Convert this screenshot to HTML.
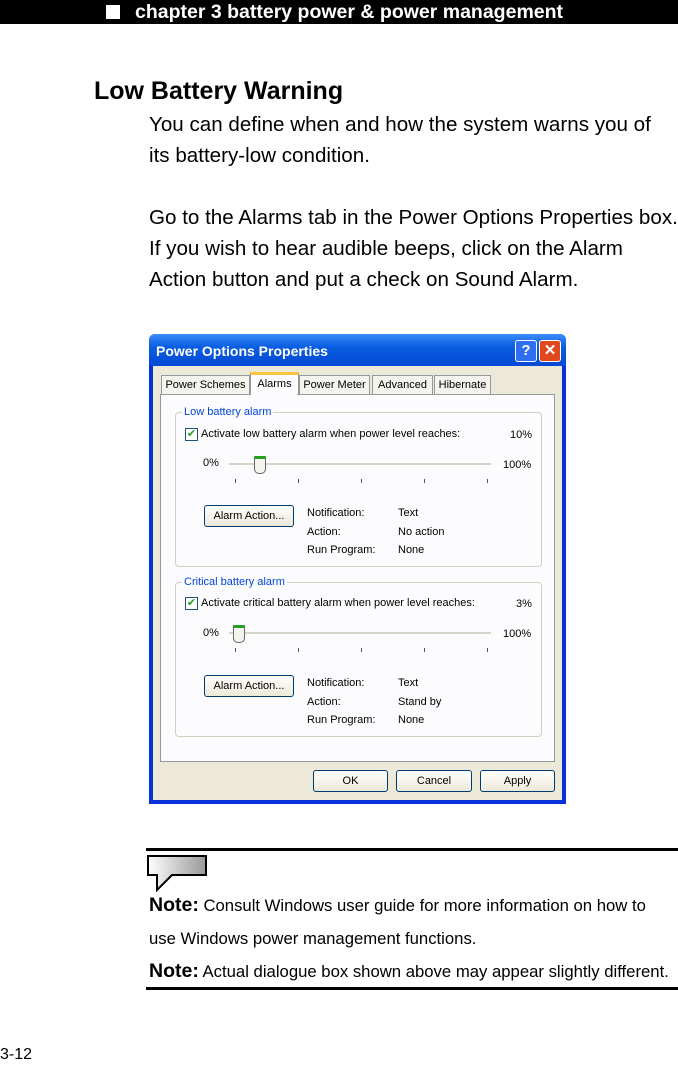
<!DOCTYPE html>
<html><head><style>
body{margin:0;width:678px;height:1090px;background:#fff;position:relative;font-family:"Liberation Sans",Arial,sans-serif;overflow:hidden}
.a{position:absolute;white-space:nowrap}
.t{font-size:20.6px;color:#000}
.d{font-family:"Liberation Sans",sans-serif;font-size:11px;color:#000}
.btn{position:absolute;border:1px solid #003c74;border-radius:3px;background:linear-gradient(#fff,#ece9d8);font-family:"Liberation Sans",sans-serif;font-size:11px;text-align:center;box-sizing:border-box}
.grp{position:absolute;border:1px solid #d0d0bf;border-radius:4px}
.tick{position:absolute;width:1px;height:4px;background:#555}
</style></head><body>
<div class="a" style="left:0;top:0;width:678px;height:24px;background:#000"></div>
<div class="a" style="left:106px;top:5px;width:14px;height:14px;background:#fff"></div>
<div class="a" style="left:135px;top:1px;font-size:19.5px;font-weight:bold;color:#fff">chapter 3 battery power &amp; power management</div>
<div class="a" style="left:94px;top:77px;font-size:25px;font-weight:bold">Low Battery Warning</div>
<div class="a t" style="left:149px;top:113px">You can define when and how the system warns you of</div>
<div class="a t" style="left:149px;top:144px">its battery-low condition.</div>
<div class="a t" style="left:149px;top:206px">Go to the Alarms tab in the Power Options Properties box.</div>
<div class="a t" style="left:149px;top:237px">If you wish to hear audible beeps, click on the Alarm</div>
<div class="a t" style="left:149px;top:268px">Action button and put a check on Sound Alarm.</div>

<div class="a" style="left:149px;top:334px;width:417px;height:470px;background:#0831d9;border-radius:6px 6px 0 0"></div>
<div class="a" style="left:149px;top:334px;width:417px;height:32px;background:linear-gradient(#3d8bfa,#0a5ee0 40%,#0549d6);border-radius:6px 6px 0 0"></div>
<div class="a" style="left:156px;top:343px;font-family:'Liberation Sans',sans-serif;font-weight:bold;font-size:14px;color:#fff">Power Options Properties</div>
<div class="a" style="left:515px;top:340px;width:20px;height:20px;background:#2d6ff0;border:1px solid #fff;border-radius:3px;color:#fff;font-weight:bold;text-align:center;font-size:15px;line-height:20px">?</div>
<div class="a" style="left:539px;top:340px;width:20px;height:20px;background:#e0481e;border:1px solid #fff;border-radius:3px;color:#fff;font-weight:bold;text-align:center;font-size:15px;line-height:20px">✕</div>
<div class="a" style="left:153px;top:366px;width:409px;height:434px;background:#ece9d8"></div>
<div class="a d" style="left:161px;top:375px;width:87px;height:18px;border:1px solid #919b9c;background:#f4f3ee;text-align:center;line-height:18px">Power Schemes</div>
<div class="a d" style="left:250px;top:372px;width:47px;height:22px;border:1px solid #919b9c;border-top:3px solid #ffc83c;border-bottom:none;background:#fcfcfe;text-align:center;line-height:18px">Alarms</div>
<div class="a d" style="left:299px;top:375px;width:69px;height:18px;border:1px solid #919b9c;background:#f4f3ee;text-align:center;line-height:18px">Power Meter</div>
<div class="a d" style="left:372px;top:375px;width:59px;height:18px;border:1px solid #919b9c;background:#f4f3ee;text-align:center;line-height:18px">Advanced</div>
<div class="a d" style="left:434px;top:375px;width:55px;height:18px;border:1px solid #919b9c;background:#f4f3ee;text-align:center;line-height:18px">Hibernate</div>
<div class="a" style="left:160px;top:394px;width:393px;height:366px;border:1px solid #919b9c;background:#fcfcfe"></div>
<div class="a" style="left:251px;top:393px;width:46px;height:3px;background:#fcfcfe"></div>

<div class="grp" style="left:175px;top:412px;width:365px;height:153px"></div>
<div class="a d" style="left:182px;top:406px;background:#fcfcfe;color:#0046d5;padding:0 2px">Low battery alarm</div>
<div class="a" style="left:185px;top:428px;width:11px;height:11px;border:1px solid #1c5180;background:#fff;color:#21a121;font-size:11px;line-height:11px;text-align:center">✔</div>
<div class="a d" style="left:201px;top:428px">Activate low battery alarm when power level reaches:</div>
<div class="a d" style="left:510px;top:429px">10%</div>
<div class="a d" style="left:203px;top:457px">0%</div>
<div class="a" style="left:229px;top:463px;width:262px;height:2px;background:#d6d3c8;border-bottom:1px solid #fff"></div>
<div class="a" style="left:254px;top:456px;width:10px;height:14px;background:#f4f4ee;border:1px solid #666;border-top:3px solid #21a121;border-radius:1px 1px 5px 5px"></div>
<div class="a d" style="left:503px;top:459px">100%</div>
<div class="tick" style="left:235px;top:479px"></div><div class="tick" style="left:298px;top:479px"></div><div class="tick" style="left:361px;top:479px"></div><div class="tick" style="left:424px;top:479px"></div><div class="tick" style="left:487px;top:479px"></div>
<div class="btn" style="left:204px;top:505px;width:90px;height:22px;line-height:20px">Alarm Action...</div>
<div class="a d" style="left:307px;top:504px;line-height:18.5px">Notification:<br>Action:<br>Run Program:</div>
<div class="a d" style="left:398px;top:504px;line-height:18.5px">Text<br>No action<br>None</div>

<div class="grp" style="left:175px;top:582px;width:365px;height:153px"></div>
<div class="a d" style="left:182px;top:576px;background:#fcfcfe;color:#0046d5;padding:0 2px">Critical battery alarm</div>
<div class="a" style="left:185px;top:597px;width:11px;height:11px;border:1px solid #1c5180;background:#fff;color:#21a121;font-size:11px;line-height:11px;text-align:center">✔</div>
<div class="a d" style="left:201px;top:597px">Activate critical battery alarm when power level reaches:</div>
<div class="a d" style="left:516px;top:598px">3%</div>
<div class="a d" style="left:203px;top:627px">0%</div>
<div class="a" style="left:229px;top:632px;width:262px;height:2px;background:#d6d3c8;border-bottom:1px solid #fff"></div>
<div class="a" style="left:233px;top:625px;width:10px;height:14px;background:#f4f4ee;border:1px solid #666;border-top:3px solid #21a121;border-radius:1px 1px 5px 5px"></div>
<div class="a d" style="left:503px;top:628px">100%</div>
<div class="tick" style="left:235px;top:648px"></div><div class="tick" style="left:298px;top:648px"></div><div class="tick" style="left:361px;top:648px"></div><div class="tick" style="left:424px;top:648px"></div><div class="tick" style="left:487px;top:648px"></div>
<div class="btn" style="left:204px;top:675px;width:90px;height:22px;line-height:20px">Alarm Action...</div>
<div class="a d" style="left:307px;top:674px;line-height:18.5px">Notification:<br>Action:<br>Run Program:</div>
<div class="a d" style="left:398px;top:674px;line-height:18.5px">Text<br>Stand by<br>None</div>

<div class="btn" style="left:313px;top:770px;width:75px;height:22px;line-height:20px">OK</div>
<div class="btn" style="left:396px;top:770px;width:76px;height:22px;line-height:20px">Cancel</div>
<div class="btn" style="left:480px;top:770px;width:75px;height:22px;line-height:20px">Apply</div>

<div class="a" style="left:146px;top:848px;width:532px;height:3px;background:#000"></div>
<svg class="a" style="left:147px;top:855px" width="62" height="38"><defs><linearGradient id="g" x1="0" x2="1"><stop offset="0" stop-color="#fff"/><stop offset="1" stop-color="#999"/></linearGradient></defs><path d="M1 1H59V20H25L10 35V20H1Z" fill="url(#g)" stroke="#000" stroke-width="2"/></svg>
<div class="a" style="left:149px;top:894px;font-size:16.7px"><b style="font-size:19.5px">Note:</b> Consult Windows user guide for more information on how to</div>
<div class="a" style="left:149px;top:929px;font-size:16.7px">use Windows power management functions.</div>
<div class="a" style="left:149px;top:960px;font-size:16.7px"><b style="font-size:19.5px">Note:</b> Actual dialogue box shown above may appear slightly different.</div>
<div class="a" style="left:146px;top:987px;width:532px;height:3px;background:#000"></div>
<div class="a" style="left:0;top:1046px;font-size:16px">3-12</div>
</body></html>
